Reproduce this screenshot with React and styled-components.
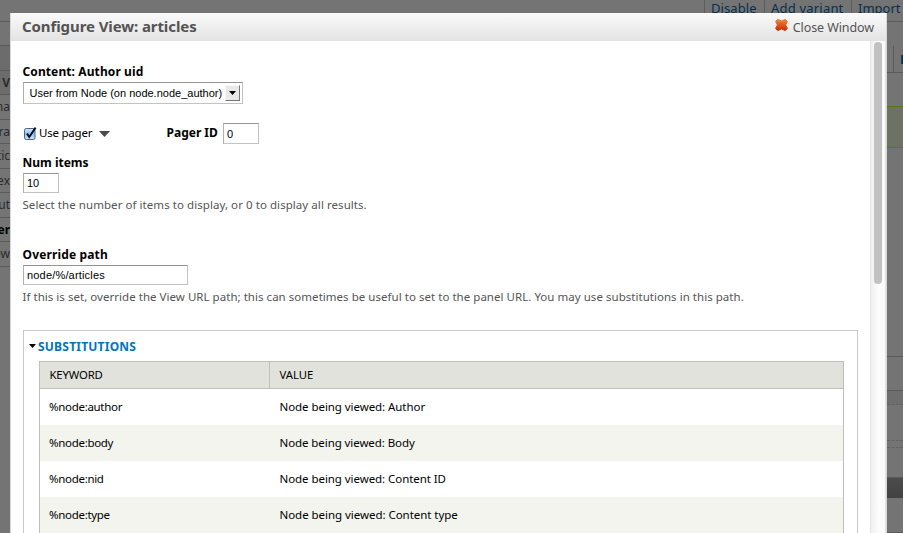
import React from "react";
import styled, { createGlobalStyle } from "styled-components";

const Global = createGlobalStyle`
  *{box-sizing:border-box}
  html,body{margin:0;height:100%;overflow:hidden}
  #root{height:533px}
  body{font-family:"Noto Sans",sans-serif;font-size:11.5px;color:#000;background:#737373}
`;

const Page = styled.div`
  position: relative;
  width: 903px;
  height: 533px;
  overflow: hidden;
  background: #747474;
`;
const Backdrop = styled.div`
  height: 100%;
  display: grid;
  grid-template-columns: 10px 1fr 16px;
  grid-template-rows: 13px 1fr;
`;
const ActionBar = styled.nav`
  grid-column: 1 / -1;
  display: flex;
  justify-content: flex-end;
`;
const ActionLink = styled.a`
  flex: none;
  width: ${(p) => p.$width}px;
  height: 13px;
  padding-left: 6px;
  border-left: 1px solid #5c5c5c;
  color: #04304d;
  font-size: 13px;
  line-height: 17px;
  letter-spacing: ${(p) => p.$track || 0}px;
  white-space: nowrap;
`;
const SideList = styled.div`
  grid-column: 1;
  padding-top: 8px;
`;
const SideRow = styled.div`
  height: ${(p) => p.$height || 24.5}px;
  display: flex;
  justify-content: flex-end;
  align-items: center;
  border-top: 1px solid #5a5a5a;
  background: ${(p) => (p.$shade ? "#6c6c6c" : "transparent")};
  color: ${(p) => (p.$dark ? "#000" : "#2b2b2b")};
  font-size: 12px;
  font-weight: ${(p) => (p.$strong ? 700 : 400)};
  white-space: nowrap;
`;
const RightStrip = styled.div`
  grid-column: 3;
`;
const Block = styled.div`
  height: ${(p) => p.$height}px;
  border-top: ${(p) => p.$line || "1px solid #5a5a5a"};
  background: ${(p) => p.$bg || "transparent"};
`;
const TabStub = styled.div`
  width: 10px;
  height: 26px;
  margin-left: 6px;
  padding-left: 6px;
  border-left: 1px solid #5a5a5a;
  color: #04304d;
  font-size: 13px;
  font-weight: 700;
  line-height: 26px;
`;

const Modal = styled.section`
  position: absolute;
  left: 10px;
  top: 13px;
  width: 877px;
  height: 520px;
  display: flex;
  flex-direction: column;
  background: #fff;
  border: solid #d8d8d8;
  border-width: 0 1px;
`;
const Header = styled.header`
  flex: none;
  height: 28px;
  padding: 0 12px 0 11px;
  display: flex;
  align-items: center;
  background: linear-gradient(#fafafa, #e3e3e3);
`;
const Title = styled.h1`
  flex: 1;
  margin: 0 0 2px;
  color: #545454;
  font-size: 15px;
  line-height: 26px;
  letter-spacing: -0.09px;
`;
const Close = styled.a`
  display: flex;
  align-items: center;
  gap: 4px;
  color: #545454;
  font-size: 12.5px;
  letter-spacing: -0.1px;
  svg { margin-top: -5px; }
`;
const Body = styled.div`
  flex: 1;
  min-height: 0;
  display: flex;
`;
const Content = styled.div`
  flex: 1;
  overflow: hidden;
  padding: 22px 12px 0 12px;
`;
const ScrollTrack = styled.div`
  flex: none;
  width: 16px;
  padding: 1px 4px 0 3px;
  border: solid #e4e4e4;
  border-width: 0 1px;
  background: linear-gradient(90deg, #f0f0f0, #fdfdfd 60%, #fafafa);
`;
const Thumb = styled.div`
  width: 8px;
  height: 242px;
  border-radius: 4px;
  background: #c1c1c1;
`;

const Field = styled.div`
  height: ${(p) => p.$height}px;
`;
const Label = styled.label`
  display: block;
  height: 19px;
  margin-left: -0.5px;
  line-height: 17px;
  font-size: 12px;
  font-weight: 700;
  letter-spacing: ${(p) => p.$track || 0}px;
  white-space: nowrap;
`;
const Help = styled.p`
  margin: 3px 0 0 -0.5px;
  color: #555;
  line-height: 17px;
  letter-spacing: ${(p) => p.$track}px;
  white-space: nowrap;
`;
const TextBox = styled.div`
  width: ${(p) => p.$width}px;
  height: ${(p) => p.$height || 20}px;
  padding-left: 3px;
  display: flex;
  align-items: center;
  border: 1px solid #c3c3c3;
  border-top-color: #949494;
  border-left-color: #b0b0b0;
  font-family: "Liberation Sans", sans-serif;
  font-size: 11px;
  letter-spacing: ${(p) => p.$track || 0}px;
`;
const SelectBox = styled(TextBox)`
  justify-content: space-between;
  padding: 0 2px 0 5.5px;
`;
const SelectButton = styled.span`
  width: 15px;
  height: 16px;
  display: flex;
  align-items: center;
  justify-content: center;
  background: #e9e9e9;
  border: 1px solid #f8f8f8;
  border-right-color: #777;
  border-bottom-color: #777;
`;
const PagerRow = styled.div`
  height: 31px;
  display: flex;
  align-items: center;
  padding-bottom: 10px;
`;
const PagerToggle = styled.span`
  width: 144px;
  display: flex;
  align-items: center;
  white-space: nowrap;
`;
const PagerText = styled.span`
  margin: 0 7px 3px 2px;
  letter-spacing: -0.22px;
`;
const PagerLabel = styled(Label)`
  width: 56.5px;
  height: 19px;
`;

const Fieldset = styled.div`
  height: 240px;
  padding: 5px 13px 0 15px;
  border: 1px solid #c9c9c9;
`;
const Legend = styled.a`
  display: flex;
  align-items: center;
  gap: 2px;
  height: 20px;
  margin: 0 0 5px -10px;
  color: #0074bd;
  font-size: 12px;
  font-weight: 700;
  letter-spacing: 0.22px;
`;
const Table = styled.div`
  border: 1px solid #bebfb9;
`;
const Row = styled.div`
  display: grid;
  grid-template-columns: 230px 1fr;
  height: 36px;
  background: ${(p) => (p.$even ? "#f3f4ee" : "#fff")};
`;
const HeadRow = styled(Row)`
  height: 27px;
  background: #e1e2dc;
  border-bottom: 1px solid #bebfb9;
`;
const Cell = styled.div`
  display: flex;
  align-items: center;
  padding: 0 0 2px 9.5px;
  font-size: 11.5px;
  letter-spacing: ${(p) => p.$track || 0}px;
  white-space: nowrap;
`;
const KeyCell = styled(Cell)`
  padding-left: 9px;
`;
const HeadCell = styled(Cell)`
  padding-bottom: 1px;
  font-size: 11.3px;
  &:first-child { border-right: 1px solid #bebfb9; }
`;

const CloseIcon = () => (
  <svg width="15" height="14" viewBox="0 0 15 14">
    <defs>
      <linearGradient id="cross" x1="0" y1="0" x2="0" y2="1">
        <stop offset="0" stopColor="#f08a3c" />
        <stop offset="1" stopColor="#c92a04" />
      </linearGradient>
    </defs>
    <path d="M3.8 1.2 7.5 3 11.2 1.2 13.4 3.4 11.6 7 13.4 10.4 11.2 12.6 7.5 10.9 3.8 12.6 1.6 10.4 3.4 7 1.6 3.4Z" fill="url(#cross)" stroke="url(#cross)" strokeWidth="1" strokeLinejoin="round" />
  </svg>
);
const Arrow = ({ w, h, color }) => (
  <svg width={w} height={h} viewBox="0 0 10 6" preserveAspectRatio="none">
    <path d="M0 0H10L5 6Z" fill={color} />
  </svg>
);
const CheckIcon = () => (
  <svg width="14" height="15" viewBox="0 0 14 15">
    <defs>
      <linearGradient id="box" x1="0" y1="0" x2="0" y2="1">
        <stop offset="0" stopColor="#d8e9f8" />
        <stop offset=".5" stopColor="#8fc1ee" />
        <stop offset="1" stopColor="#c9efff" />
      </linearGradient>
    </defs>
    <rect x="1.5" y="2.5" width="10.5" height="11" rx="1.8" fill="url(#box)" stroke="#4a6288" />
    <path d="M4 7.5 6.2 11 12.6 1.6" fill="none" stroke="#080f1c" strokeWidth="1.9" />
  </svg>
);

const side = ["V", "ma", "ra", "tic", "ex", "ut", "er", "ew"];
const rows = [
  ["%node:author", "Node being viewed: Author", -0.31, -0.06],
  ["%node:body", "Node being viewed: Body", -0.31, -0.08],
  ["%node:nid", "Node being viewed: Content ID", -0.31, -0.06],
  ["%node:type", "Node being viewed: Content type", -0.31, -0.04],
];

export default function App() {
  return (
    <Page>
      <Global />
      <Backdrop>
        <ActionBar>
          <ActionLink $width={60} $track={0.1}>Disable</ActionLink>
          <ActionLink $width={87} $track={0.2}>Add variant</ActionLink>
          <ActionLink $width={52}>Import</ActionLink>
        </ActionBar>
        <SideList>
          <SideRow $height={24} />
          <SideRow $height={25} $shade />
          {side.map((s, i) => (
            <SideRow key={s} $shade={i === 0} $strong={i === 0 || s === "er"} $dark={s === "er"} $height={i === 0 ? 24 : 24.5}>{s}</SideRow>
          ))}
          <SideRow />
        </SideList>
        <RightStrip>
          <Block $height={8} $line="none" />
          <Block $height={25} />
          <TabStub>D</TabStub>
          <Block $height={34} />
          <Block $height={41} $bg="#6d7265" $line="1px solid #4f7a1c" />
          <Block $height={209} $line="1px solid #4f7a1c" />
          <Block $height={34} />
          <Block $height={14} $bg="#6e6e6e" />
          <Block $height={36} $line="1px dashed #616161" />
          <Block $height={7} $line="1px dashed #616161" />
          <Block $height={30} $line="1px dashed #616161" />
          <Block $height={21} $bg="linear-gradient(#4c4c4c,#424242)" />
          <Block $height={34} $line="none" />
          <Block $height={1} />
        </RightStrip>
      </Backdrop>
      <Modal>
        <Header>
          <Title>Configure View: articles</Title>
          <Close><CloseIcon />Close Window</Close>
        </Header>
        <Body>
          <Content>
            <Field $height={60}>
              <Label $track={0.1}>Content: Author uid</Label>
              <SelectBox $width={220} $height={22}>
                User from Node (on node.node_author)
                <SelectButton><Arrow w={7} h={4} color="#000" /></SelectButton>
              </SelectBox>
            </Field>
            <PagerRow>
              <PagerToggle>
                <CheckIcon />
                <PagerText>Use pager</PagerText>
                <Arrow w={11} h={6} color="#4a4a4a" />
              </PagerToggle>
              <PagerLabel>Pager ID</PagerLabel>
              <TextBox $width={36} $height={21}>0</TextBox>
            </PagerRow>
            <Field $height={92}>
              <Label>Num items</Label>
              <TextBox $width={36}>10</TextBox>
              <Help $track={0.06}>Select the number of items to display, or 0 to display all results.</Help>
            </Field>
            <Field $height={84}>
              <Label $track={0.15}>Override path</Label>
              <TextBox $width={165} $track={0.18}>node/%/articles</TextBox>
              <Help $track={0.035}>If this is set, override the View URL path; this can sometimes be useful to set to the panel URL. You may use substitutions in this path.</Help>
            </Field>
            <Fieldset>
              <Legend><Arrow w={7} h={4} color="#000" />SUBSTITUTIONS</Legend>
              <Table>
                <HeadRow>
                  <HeadCell $track={-0.15}>KEYWORD</HeadCell>
                  <HeadCell>VALUE</HeadCell>
                </HeadRow>
                {rows.map(([key, value, keyTrack, valueTrack], i) => (
                  <Row key={key} $even={i % 2 === 1}>
                    <KeyCell $track={keyTrack}>{key}</KeyCell>
                    <Cell $track={valueTrack}>{value}</Cell>
                  </Row>
                ))}
              </Table>
            </Fieldset>
          </Content>
          <ScrollTrack><Thumb /></ScrollTrack>
        </Body>
      </Modal>
    </Page>
  );
}
